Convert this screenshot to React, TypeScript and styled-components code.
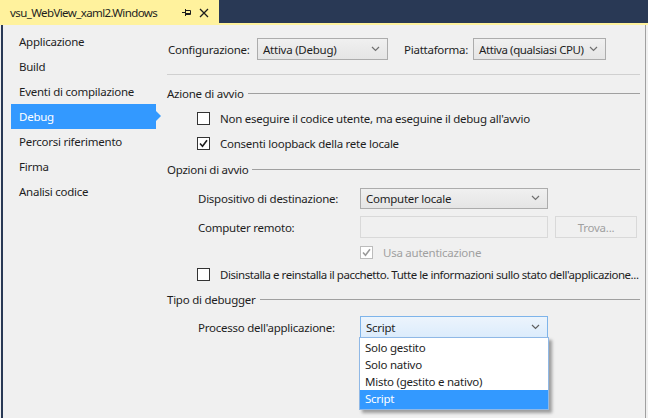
import React from "react";
import styled, { createGlobalStyle, css } from "styled-components";

const Global = createGlobalStyle`
  html, body { margin: 0; padding: 0; background: #f0f0f0; }
  body {
    font-family: "Noto Sans", "Open Sans", sans-serif;
    font-size: 11.5px;
    letter-spacing: -0.25px;
    color: #1e1e1e;
  }
  * { box-sizing: border-box; }
`;

const Page = styled.div`
  width: 648px;
  height: 418px;
  overflow: hidden;
  display: flex;
  flex-direction: column;
  background: #f0f0f0;
`;

const TopBar = styled.div`
  height: 23px;
  background: #293955;
  display: flex;
  flex-shrink: 0;
`;

const Tab = styled.div`
  width: 219px;
  height: 23px;
  background: #fff29d;
  display: flex;
  align-items: center;
  padding: 2px 7px 0 10px;
  color: #1e1e1e;
`;

const TabTitle = styled.span`
  flex: 1;
  white-space: nowrap;
  letter-spacing: -0.6px;
`;

const TabIcon = styled.span`
  width: 17px;
  height: 16px;
  display: flex;
  align-items: center;
  justify-content: center;
`;

const Strip = styled.div`
  height: 2px;
  background: #fff29d;
  flex-shrink: 0;
`;

const Body = styled.div`
  flex: 1;
  display: flex;
  padding: 0 2px 0 1px;
  min-height: 0;
`;

const Sidebar = styled.nav`
  width: 159px;
  flex-shrink: 0;
  border-left: 2px solid #293955;
  padding: 4px 0 0 8px;
  display: flex;
  flex-direction: column;
`;

const NavItem = styled.div<{ $active?: boolean }>`
  position: relative;
  width: 145px;
  height: 25px;
  line-height: 25px;
  padding-left: 8px;
  white-space: nowrap;
  ${(p) =>
    p.$active &&
    css`
      background: #3399ff;
      color: #ffffff;
      &::after {
        content: "";
        position: absolute;
        right: -5px;
        top: 7px;
        border-top: 5px solid transparent;
        border-bottom: 5px solid transparent;
        border-left: 5px solid #3399ff;
      }
    `}
`;

const Main = styled.main`
  flex: 1;
  min-width: 0;
  overflow: hidden;
  border-right: 1px solid #a0a0a0;
  padding: 13px 5px 0 7px;
  display: flex;
  flex-direction: column;
`;

const TopRow = styled.div`
  display: flex;
  align-items: center;
  height: 22px;
`;

const Label = styled.span<{ $w: number; $ml?: number }>`
  width: ${(p) => p.$w}px;
  margin-left: ${(p) => p.$ml ?? 0}px;
  white-space: nowrap;
  flex-shrink: 0;
`;

const Combo = styled.div<{ $w: number; $h?: number; $open?: boolean }>`
  position: relative;
  width: ${(p) => p.$w}px;
  height: ${(p) => p.$h ?? 22}px;
  border: 1px solid ${(p) => (p.$open ? "#7eb4ea" : "#acacac")};
  background: ${(p) =>
    p.$open
      ? "linear-gradient(#ecf4fc, #dcecfc)"
      : "linear-gradient(#f0f0f0, #e5e5e5)"};
  display: flex;
  align-items: center;
  padding: 0 0 0 5px;
  white-space: nowrap;
  flex-shrink: 0;
`;

const ComboText = styled.span<{ $tight?: boolean }>`
  flex: 1;
  letter-spacing: ${(p) => (p.$tight ? "-0.4px" : "inherit")};
`;

const Chevron = styled.svg`
  width: 9px;
  height: 6px;
  margin-right: 7px;
`;

const Separator = styled.div`
  margin-top: 14px;
  height: 1px;
  background: #d0d0d0;
`;

const SectionHeader = styled.div<{ $mt: number }>`
  margin-top: ${(p) => p.$mt}px;
  height: 18px;
  display: flex;
  align-items: center;
  white-space: nowrap;
  &::after {
    content: "";
    flex: 1;
    height: 1px;
    background: #a0a0a0;
    margin-left: 4px;
  }
`;

const CheckRow = styled.div<{
  $indent: number;
  $h: number;
  $mt?: number;
  $disabled?: boolean;
  $tight?: boolean;
}>`
  display: flex;
  align-items: center;
  height: ${(p) => p.$h}px;
  margin-top: ${(p) => p.$mt ?? 0}px;
  padding-left: ${(p) => p.$indent}px;
  gap: 10px;
  white-space: nowrap;
  letter-spacing: ${(p) => (p.$tight ? "-0.45px" : "inherit")};
  color: ${(p) => (p.$disabled ? "#a0a0a0" : "#1e1e1e")};
`;

const Box = styled.span<{ $disabled?: boolean }>`
  width: 13px;
  height: 13px;
  border: 1px solid ${(p) => (p.$disabled ? "#bcbcbc" : "#333333")};
  background: #ffffff;
  display: flex;
  align-items: center;
  justify-content: center;
  flex-shrink: 0;
`;

const FormRow = styled.div<{ $mt: number }>`
  display: flex;
  align-items: center;
  margin-top: ${(p) => p.$mt}px;
  padding-left: 31px;
  height: 22px;
  position: relative;
`;

const TextInput = styled.div`
  width: 188px;
  height: 22px;
  border: 1px solid #d9d9d9;
  background: #f0f0f0;
`;

const Button = styled.div`
  width: 82px;
  height: 22px;
  margin-left: 7px;
  border: 1px solid #d9d9d9;
  background: #f0f0f0;
  color: #a0a0a0;
  display: flex;
  align-items: center;
  justify-content: center;
`;

const DropList = styled.div`
  position: absolute;
  left: -1px;
  top: 21px;
  width: 190px;
  height: 73px;
  background: #ffffff;
  border: 1px solid #8fb8e6;
  box-shadow: 3px 3px 3px rgba(0, 0, 0, 0.35);
  padding-top: 1px;
  display: flex;
  flex-direction: column;
  z-index: 2;
`;

const DropItem = styled.div<{ $selected?: boolean }>`
  height: 17px;
  line-height: 17px;
  padding-left: 5px;
  white-space: nowrap;
  ${(p) =>
    p.$selected &&
    css`
      height: 19px;
      line-height: 18px;
      background: #3399ff;
      color: #ffffff;
    `}
`;

const ControlSlot = styled.div`
  position: relative;
`;

const ChevronIcon = ({ color = "#707070" }: { color?: string }) => (
  <Chevron viewBox="0 0 9 6">
    <path d="M1 1 L4.5 4.5 L8 1" fill="none" stroke={color} strokeWidth="1.2" />
  </Chevron>
);

const Check = ({ color }: { color: string }) => (
  <svg width="9" height="9" viewBox="0 0 9 9">
    <path d="M1 4.5 L3.5 7.2 L8 1.2" fill="none" stroke={color} strokeWidth="1.6" />
  </svg>
);

const navItems = [
  "Applicazione",
  "Build",
  "Eventi di compilazione",
  "Debug",
  "Percorsi riferimento",
  "Firma",
  "Analisi codice",
];

export default function App() {
  return (
    <Page>
      <Global />
      <TopBar>
        <Tab>
          <TabTitle>vsu_WebView_xaml2.Windows</TabTitle>
          <TabIcon>
            <svg width="10" height="9" viewBox="0 0 10 9">
              <path
                d="M0 4.5 H3 M3.5 1 V8 M3.5 2.5 H8.5 V6.5 H3.5 M3.5 5.5 H8.5"
                fill="none"
                stroke="#1e1e1e"
                strokeWidth="1"
              />
            </svg>
          </TabIcon>
          <TabIcon>
            <svg width="10" height="10" viewBox="0 0 10 10">
              <path d="M1 1 L9 9 M9 1 L1 9" stroke="#1e1e1e" strokeWidth="1.3" />
            </svg>
          </TabIcon>
        </Tab>
      </TopBar>
      <Strip />
      <Body>
        <Sidebar>
          {navItems.map((n) => (
            <NavItem key={n} $active={n === "Debug"}>
              {n}
            </NavItem>
          ))}
        </Sidebar>
        <Main>
          <TopRow>
            <Label $w={89} $ml={1}>Configurazione:</Label>
            <Combo $w={131}>
              <ComboText>Attiva (Debug)</ComboText>
              <ChevronIcon />
            </Combo>
            <Label $w={69} $ml={16}>Piattaforma:</Label>
            <Combo $w={133}>
              <ComboText $tight>Attiva (qualsiasi CPU)</ComboText>
              <ChevronIcon />
            </Combo>
          </TopRow>
          <Separator />
          <SectionHeader $mt={9}>Azione di avvio</SectionHeader>
          <CheckRow $indent={30} $h={25} $mt={4}>
            <Box />
            Non eseguire il codice utente, ma eseguine il debug all'avvio
          </CheckRow>
          <CheckRow $indent={30} $h={25}>
            <Box>
              <Check color="#1e1e1e" />
            </Box>
            Consenti loopback della rete locale
          </CheckRow>
          <SectionHeader $mt={4}>Opzioni di avvio</SectionHeader>
          <FormRow $mt={9}>
            <Label $w={162}>Dispositivo di destinazione:</Label>
            <Combo $w={188} $h={21}>
              <ComboText>Computer locale</ComboText>
              <ChevronIcon />
            </Combo>
          </FormRow>
          <FormRow $mt={7}>
            <Label $w={162}>Computer remoto:</Label>
            <TextInput />
            <Button>Trova...</Button>
          </FormRow>
          <CheckRow $indent={193} $h={20} $mt={4} $disabled>
            <Box $disabled>
              <Check color="#9a9a9a" />
            </Box>
            Usa autenticazione
          </CheckRow>
          <CheckRow $indent={30} $h={25} $tight>
            <Box />
            Disinstalla e reinstalla il pacchetto. Tutte le informazioni sullo stato dell'applicazione...
          </CheckRow>
          <SectionHeader $mt={3}>Tipo di debugger</SectionHeader>
          <FormRow $mt={8}>
            <Label $w={162}>Processo dell'applicazione:</Label>
            <ControlSlot>
              <Combo $w={188} $open>
                <ComboText>Script</ComboText>
                <ChevronIcon color="#606060" />
              </Combo>
              <DropList>
                <DropItem>Solo gestito</DropItem>
                <DropItem>Solo nativo</DropItem>
                <DropItem>Misto (gestito e nativo)</DropItem>
                <DropItem $selected>Script</DropItem>
              </DropList>
            </ControlSlot>
          </FormRow>
        </Main>
      </Body>
    </Page>
  );
}
